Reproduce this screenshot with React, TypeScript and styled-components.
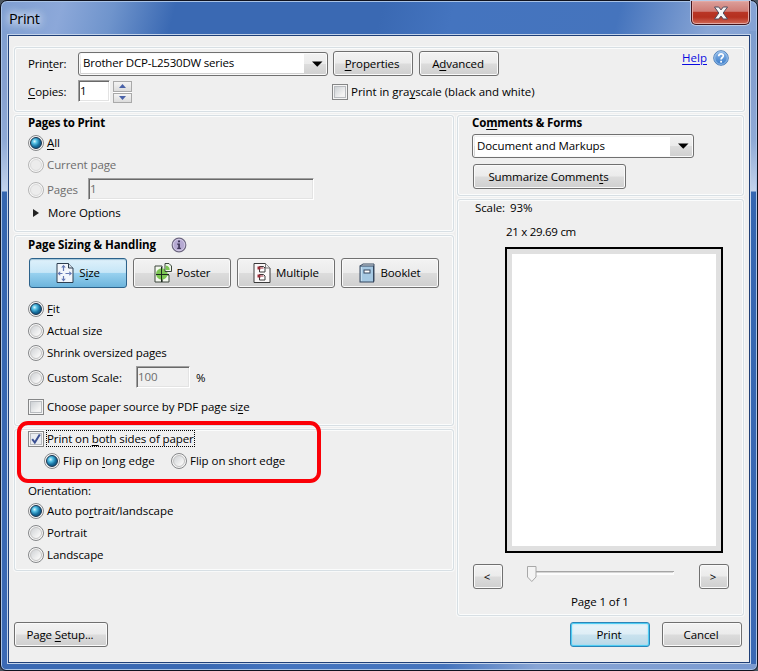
import React from 'react';
import styled, { createGlobalStyle, css } from 'styled-components';

const GlobalStyle = createGlobalStyle`
  * { box-sizing: border-box; }
  body { margin: 0; background: #4a5560; overflow: hidden; }
  #root { font-family: "Open Sans", "Noto Sans", sans-serif; font-size: 11.5px; line-height: 16px; color: #000; }
  button, input { font: inherit; color: inherit; margin: 0; }
`;

/* ---------- window chrome ---------- */

const Window = styled.div`
  width: 758px;
  height: 671px;
  border: 1px solid #10131f;
  border-radius: 7px 7px 6px 6px;
  box-shadow: inset 0 0 0 1px #a9c3e6;
  display: flex;
  flex-direction: column;
  padding: 0 7px 7px;
  background:
    linear-gradient(#809fd0 0, #87a1d0 60px, #8faad6 110px, #c3d3ec 160px, #3566b0 161px, #3b69b4 100%) left 1px top 30px / 7px 633px no-repeat,
    linear-gradient(#7d9dce 0, #87a1d0 60px, #8faad6 110px, #c3d3ec 160px, #3566b0 161px, #3b69b4 100%) right 1px top 30px / 7px 633px no-repeat,
    linear-gradient(105deg, #7f9ed1 0, #8ca8d9 60px, #6f94cc 110px, #3a69b3 170px, #3a69b3 370px, #4474bf 440px, #4574bd 600px, #88a5d5 690px, #7a9ad0 100%);
`;

const TitleBar = styled.header`
  height: 34px;
  flex: none;
  display: flex;
  justify-content: space-between;
  padding-left: 1px;
`;

const Title = styled.h1`
  margin: 8px 0 0;
  font-size: 14.5px;
  font-weight: 400;
  line-height: 20px;
  letter-spacing: -0.35px;
  text-shadow: 0 0 8px #fff, 0 0 10px #dce8f8, 0 0 12px #dce8f8;
`;

const CloseButton = styled.button`
  width: 59px;
  height: 24px;
  padding: 0;
  display: flex;
  align-items: center;
  justify-content: center;
  border: 1px solid #43141c;
  border-top: 0;
  border-radius: 0 0 5px 5px;
  box-shadow: inset 0 0 0 1px #e3a9a4, 0 0 0 1px #b9c9e4;
  background: linear-gradient(#dca09b 0, #cf7c75 45%, #b93626 48%, #b5301f 70%, #d06a58 100%);
`;

const Client = styled.main`
  flex: 1;
  border: 1px solid #1f3f77;
  box-shadow: 0 0 0 1px #c3d3ea;
  background: #efefef;
  padding: 11px 4px 0 5px;
  display: flex;
  flex-direction: column;
`;

/* ---------- layout ---------- */

const Panel = styled.section<{ $h: number; $pad: number }>`
  height: ${p => p.$h}px;
  flex: none;
  padding-left: ${p => p.$pad}px;
  border: 1px solid #d7dfe4;
  border-radius: 3px;
  box-shadow: inset 0 0 0 1px #fbfcfc, 0 0 0 1px #f8f9f9;
`;

const Columns = styled.div`
  display: grid;
  grid-template-columns: 440px 287px;
  column-gap: 3px;
  margin-top: 3px;
`;

const Column = styled.div`
  display: flex;
  flex-direction: column;
  gap: 3px;
`;

const Row = styled.div<{ $h: number; $top?: number; $indent?: number }>`
  height: ${p => p.$h}px;
  margin-top: ${p => p.$top ?? 0}px;
  margin-left: ${p => p.$indent ?? 0}px;
  display: flex;
  align-items: center;
`;

const Footer = styled.footer`
  display: flex;
  gap: 12px;
  margin-top: 6px;
  padding-right: 3px;
`;

const Gap = styled.span<{ $w?: number }>`
  ${p => (p.$w ? css`width: ${p.$w}px; flex: none;` : css`flex: 1;`)}
`;

/* ---------- text ---------- */

const Text = styled.span<{ $ls?: number; $bold?: boolean; $off?: boolean; $w?: number }>`
  white-space: nowrap;
  letter-spacing: ${p => p.$ls ?? -0.1}px;
  font-weight: ${p => (p.$bold ? 700 : 400)};
  color: ${p => (p.$off ? '#6d6d6d' : '#000')};
  ${p => p.$w && css`width: ${p.$w}px; flex: none;`}
  u { text-underline-offset: 2px; text-decoration-thickness: 1px; text-decoration-skip-ink: none; }
`;

/* Renders a caption; the letter after "_" is the underlined access key. */
function Caption({ t, ls, bold, off, w }: { t: string; ls?: number; bold?: boolean; off?: boolean; w?: number }) {
  const i = t.indexOf('_');
  return (
    <Text $ls={ls} $bold={bold} $off={off} $w={w}>
      {i < 0 ? t : <>{t.slice(0, i)}<u>{t[i + 1]}</u>{t.slice(i + 2)}</>}
    </Text>
  );
}

const HelpGroup = styled.div`
  display: flex;
  align-items: center;
  gap: 6px;
  margin: -11px 15px 0 0;
`;

const HelpLink = styled.a`
  color: #0a0ae0;
  text-decoration: underline;
  text-underline-offset: 2px;
`;

const FocusBox = styled.span`
  outline: 1px dotted #000;
  height: 15px;
  line-height: 15px;
  width: 147px;
`;

/* ---------- controls ---------- */

const Button = styled.button<{ $w: number; $h?: number; $kind?: 'active' | 'default' }>`
  width: ${p => p.$w}px;
  height: ${p => p.$h ?? 25}px;
  flex: none;
  display: flex;
  align-items: center;
  justify-content: center;
  gap: 5px;
  padding: 0 2px 0 0;
  border: 1px solid #707070;
  border-radius: 3px;
  box-shadow: inset 0 0 0 1px #fafafa;
  background: linear-gradient(#f3f3f3 0, #ebebeb 49%, #dcdcdc 51%, #cfcfcf 100%);
  ${p => p.$kind === 'active' && css`
    border-color: #2c628b;
    box-shadow: inset 0 1px 1px #9fc4d8;
    background: linear-gradient(#dff1fb 0, #c6e6f7 48%, #98d1ef 51%, #6cb4dc 100%);
  `}
  ${p => p.$kind === 'default' && css`
    border-color: #2b85b8;
    box-shadow: inset 0 0 0 1px #4fcdf3, inset 0 0 2px 1px #8fdcf5;
    background: linear-gradient(#e9f4f9 0, #deeef6 49%, #c9e2ee 51%, #b9d9e8 100%);
  `}
`;

const ModeButton = styled(Button)`
  padding: 0;
`;

const Combo = styled.div<{ $w: number }>`
  width: ${p => p.$w}px;
  height: 24px;
  flex: none;
  display: flex;
  align-items: center;
  border: 1px solid #707070;
  border-radius: 3px;
  padding: 1px;
  background: linear-gradient(#f2f2f2 0, #ebebeb 49%, #dddddd 51%, #cfcfcf 100%);
  box-shadow: inset 0 0 0 1px #fafafa;
`;

const ComboValue = styled.div`
  flex: 1;
  height: 19px;
  line-height: 18px;
  margin-left: 1px;
  padding-left: 2px;
  background: #fff;
`;

const Arrow = styled.svg`
  width: 22px;
  height: 6px;
  flex: none;
`;

const Field = styled.div<{ $w: number; $off?: boolean }>`
  width: ${p => p.$w}px;
  height: 22px;
  flex: none;
  margin-top: -2px;
  padding-left: 1px;
  line-height: 19px;
  border: 1px solid #a0a0a0;
  border-right-color: #fff;
  border-bottom-color: #fff;
  box-shadow: inset 1px 1px 0 #696969, inset -1px -1px 0 #e3e3e3;
  background: ${p => (p.$off ? '#f0f0f0' : '#fff')};
`;

const Spinner = styled.div`
  width: 19px;
  height: 22px;
  display: flex;
  flex-direction: column;
  gap: 1px;
  background: #fff;
`;

const SpinButton = styled.div`
  flex: 1;
  display: flex;
  align-items: center;
  justify-content: center;
  border: 1px solid #a9a9a9;
  background: linear-gradient(#f4f4f4, #dcdcdc);
`;

const Radio = styled.span<{ $on?: boolean; $off?: boolean }>`
  width: 16px;
  height: 16px;
  flex: none;
  margin-right: 3px;
  border-radius: 50%;
  border: 1px solid ${p => (p.$off ? '#b5b5b5' : '#858789')};
  box-shadow: inset 0 0 0 1px #f6f6f6;
  display: flex;
  align-items: center;
  justify-content: center;
  background: #f4f4f4;
  &::before {
    content: '';
    width: 10px;
    height: 10px;
    border-radius: 50%;
    border: 1px solid ${p => (p.$off ? '#dadada' : '#c4c4c4')};
    background: linear-gradient(135deg, #cfd2d5, #f4f4f4 75%);
    ${p => p.$off && css`background: #ececec;`}
    ${p => p.$on && css`
      border-color: #17324e;
      background: radial-gradient(circle at 36% 34%, #d9f6fd 0, #55c0e4 24%, #16709f 55%, #0c3a5f 100%);
    `}
  }
`;

const Check = styled.span`
  width: 16px;
  height: 16px;
  flex: none;
  margin-right: 3px;
  border: 1px solid #858687;
  background: #f5f5f5;
  display: flex;
  align-items: center;
  justify-content: center;
  svg { display: block; }
`;

const CheckWell = styled.span`
  width: 12px;
  height: 12px;
  border: 1px solid #b9bcc0;
  background: linear-gradient(135deg, #cdd1d5, #f3f3f3 75%);
`;

/* ---------- preview ---------- */

const Preview = styled.div`
  width: 218px;
  height: 306px;
  margin: 6px 0 0 47px;
  border: 2px solid #000;
  padding: 5px;
  background: #e0e0e0;
`;

const Sheet = styled.div`
  height: 100%;
  background: #fff;
`;

const PageCount = styled.div`
  margin: 5px 0 0 113px;
`;

/* ---------- duplex highlight ---------- */

const Duplex = styled.div`
  position: relative;
`;

const Highlight = styled.div`
  position: absolute;
  left: -11px;
  top: -9px;
  width: 304px;
  height: 62px;
  border: 4px solid #fb0007;
  border-radius: 11px;
  pointer-events: none;
`;

/* ---------- icons ---------- */

const DownArrow = () => (
  <Arrow viewBox="0 0 22 6"><path d="M8 0.5h10.5L13.25 5.8z" fill="#000" /></Arrow>
);

const CheckBox = ({ on }: { on?: boolean }) => (
  <Check>
    {on ? (
      <svg width="14" height="14" viewBox="0 0 14 14">
        <rect x="1.5" y="1.5" width="11" height="11" fill="#e9ecf0" stroke="#b9bcc0" />
        <path d="M3.2 7.2 5.8 10.6 10.8 2.4" fill="none" stroke="#3a4f92" strokeWidth="2" />
      </svg>
    ) : <CheckWell />}
  </Check>
);

const CloseGlyph = () => (
  <svg width="16" height="14" viewBox="0 0 16 14">
    <path d="M1.5 1h4.2L8 3.9 10.3 1h4.2L10.2 7l4.3 6h-4.2L8 10.1 5.7 13H1.5l4.3-6z" fill="#f5f5f5" stroke="#4f4a5c" strokeWidth="1" />
  </svg>
);

const HelpGlyph = () => (
  <svg width="16" height="16" viewBox="0 0 16 16">
    <defs>
      <linearGradient id="help" x1="0" y1="0" x2="0" y2="1">
        <stop offset="0" stopColor="#8fb9e8" /><stop offset="1" stopColor="#3478c8" />
      </linearGradient>
    </defs>
    <circle cx="8" cy="8" r="7.3" fill="url(#help)" stroke="#5585bd" />
    <circle cx="8" cy="8" r="6.3" fill="none" stroke="#a9cdf0" strokeWidth=".8" />
    <path d="M5.7 6.2c0-3.2 4.8-3 4.6-.2C10.2 7.6 8.1 7.5 8.1 9.6" fill="none" stroke="#fff" strokeWidth="1.7" />
    <rect x="7.2" y="10.8" width="1.8" height="1.8" fill="#fff" />
  </svg>
);

const InfoGlyph = () => (
  <svg width="16" height="16" viewBox="0 0 16 16">
    <circle cx="8" cy="8" r="6.8" fill="#b5a9d2" stroke="#6d6780" strokeWidth="1.2" />
    <circle cx="8" cy="8" r="5.7" fill="none" stroke="#d9d2ea" strokeWidth=".8" />
    <path d="M7 3.5h2v1.8H7zM6.2 6.5h2.7v4.3h1v1.2H6.2v-1.2h1V7.7h-1z" fill="#3f3658" />
  </svg>
);

const SizeGlyph = () => (
  <svg width="18" height="20" viewBox="0 0 18 20">
    <path d="M1 .5h11.5L17 5v14.5H1z" fill="#f2f6fc" stroke="#2d3e50" />
    <path d="M12.5 .5V5H17" fill="#d6dee8" stroke="#2d3e50" />
    <path d="M7.5 3v5M7.5 13v4M3 10.5h3.5M9.5 10.5h4" fill="none" stroke="#6378b4" strokeWidth="1.2" />
    <path d="M7.5 1.8 9.8 4.5H5.2zM7.5 18.5 9.8 15.8H5.2zM1.5 10.5 4.2 8.2v4.6zM16 10.5 13.3 8.2v4.6z" fill="#6378b4" />
  </svg>
);

const PosterGlyph = () => (
  <svg width="18" height="20" viewBox="0 0 18 20">
    <path d="M1 3h7v16H1zM8 12h7v7H8z" fill="#f4f8ef" stroke="#3c463c" />
    <circle cx="7.8" cy="11" r="5.8" fill="#7cc653" />
    <path d="M7.5 4v15M2 11.5h13" stroke="#1d2a1d" />
    <path d="M11 .5h4l2.5 2.5v5.5H11z" fill="#eef6e8" stroke="#3c463c" />
    <path d="M11.7 2.5c2.800 .2 4 2 4 4.500h-4z" fill="#7cc653" />
  </svg>
);

const MultipleGlyph = () => (
  <svg width="18" height="20" viewBox="0 0 18 20">
    <path d="M1 .5h11.5L17 5v14.5H1z" fill="#fbf8f8" stroke="#3a3a3a" />
    <path d="M12.5 .5V5H17" fill="#eee" stroke="#777" />
    <path d="M6.5 3.500h4l1.500 1.500v4H6.500zM6.500 11.500h4l1.500 1.500v4H6.500z" fill="#fff" stroke="#3a3a3a" />
    <path d="M4.500 3.500h3v3h-3zM4.500 11.500h3v3h-3z" fill="#9a2b36" />
    <path d="M7.500 5h3M7.500 13h3" stroke="#9a2b36" />
  </svg>
);

const BookletGlyph = () => (
  <svg width="16" height="20" viewBox="0 0 16 20">
    <path d="M1 3 4 1h11v17.5" fill="#dfe6ee" stroke="#3b4c63" />
    <rect x="1" y="3" width="13.5" height="16" fill="#a6c9e3" stroke="#34465e" />
    <path d="M2.5 4v14" stroke="#c7dff0" />
    <rect x="5" y="7" width="6" height="3" fill="#fff" stroke="#34465e" />
  </svg>
);

const SliderGlyph = () => (
  <svg width="150" height="22" viewBox="0 0 150 22">
    <rect x="9" y="5" width="139" height="1" fill="#a5a5a5" />
    <rect x="9" y="6" width="139" height="3" fill="#fcfcfc" />
    <rect x="9" y="6" width="138" height="1" fill="#d5d5d5" />
    <path d="M1.5 .5H10V11l-4.200 4.500L1.500 11z" fill="#f4f4f4" stroke="#a8a8a8" />
  </svg>
);

/* ---------- dialog ---------- */

type OptionProps = { label: string; h?: number; top?: number; on?: boolean; off?: boolean; ls?: number };
const Option = ({ label, h = 22, top, on, off, ls }: OptionProps) => (
  <Row $h={h} $top={top}>
    <Radio $on={on} $off={off} />
    <Caption t={label} off={off} ls={ls} />
  </Row>
);

export default function App() {
  return (
    <>
      <GlobalStyle />
      <Window>
        <TitleBar>
          <Title>Print</Title>
          <CloseButton aria-label="Close"><CloseGlyph /></CloseButton>
        </TitleBar>
        <Client>
          <Panel $h={65} $pad={13}>
            <Row $h={25} $top={3}>
              <Caption t="Prin_ter:" ls={-0.2} w={50} />
              <Combo $w={250}>
                <ComboValue><Caption t="Brother DCP-L2530DW series" ls={-0.2} /></ComboValue>
                <DownArrow />
              </Combo>
              <Gap $w={5} />
              <Button $w={80}><Caption t="_Properties" /></Button>
              <Gap $w={6} />
              <Button $w={80}><Caption t="A_dvanced" /></Button>
              <Gap />
              <HelpGroup>
                <HelpLink href="#">Help</HelpLink>
                <HelpGlyph />
              </HelpGroup>
            </Row>
            <Row $h={24} $top={4}>
              <Caption t="_Copies:" w={50} />
              <Field $w={32}><Caption t="1" /></Field>
              <Gap $w={3} />
              <Spinner>
                <SpinButton><svg width="7" height="4"><path d="M0 4 3.5 0 7 4z" fill="#4a62a8" /></svg></SpinButton>
                <SpinButton><svg width="7" height="4"><path d="M0 0 3.5 4 7 0z" fill="#4a62a8" /></svg></SpinButton>
              </Spinner>
              <Gap $w={200} />
              <CheckBox />
              <Caption t="Print in gra_yscale (black and white)" ls={-0.04} />
            </Row>
          </Panel>

          <Columns>
            <Column>
              <Panel $h={117} $pad={13}>
                <Row $h={14}><Caption t="Pages to Print" bold ls={-0.2} /></Row>
                <Option label="_All" top={2} on />
                <Option label="Current page" off />
                <Row $h={22} $top={3}>
                  <Radio $off />
                  <Caption t="Pages" off w={41} />
                  <Field $w={226} $off><Caption t="1" off /></Field>
                </Row>
                <Row $h={22} $top={1} $indent={5}>
                  <svg width="6" height="8"><path d="M0 0 6 4 0 8z" fill="#222" /></svg>
                  <Gap $w={9} />
                  <Caption t="More Options" />
                </Row>
              </Panel>

              <Panel $h={191} $pad={13}>
                <Row $h={18}>
                  <Caption t="Page Sizing & Handling" bold ls={-0.08} w={143} />
                  <InfoGlyph />
                </Row>
                <Row $h={30} $top={4} $indent={1}>
                  <ModeButton $w={98} $h={30} $kind="active"><SizeGlyph /><Caption t="S_ize" /></ModeButton>
                  <Gap $w={6} />
                  <ModeButton $w={98} $h={30}><PosterGlyph /><Caption t="Poster" /></ModeButton>
                  <Gap $w={6} />
                  <ModeButton $w={98} $h={30}><MultipleGlyph /><Caption t="Multiple" /></ModeButton>
                  <Gap $w={6} />
                  <ModeButton $w={98} $h={30}><BookletGlyph /><Caption t="Booklet" /></ModeButton>
                </Row>
                <Option label="_Fit" top={10} on />
                <Option label="Actual size" />
                <Option label="Shrink oversized pages" ls={-0.14} />
                <Row $h={22} $top={3}>
                  <Radio />
                  <Caption t="Custom Scale:" w={89} ls={0} />
                  <Field $w={54} $off><Caption t="100" off /></Field>
                  <Gap $w={6} />
                  <Caption t="%" />
                </Row>
                <Row $h={22} $top={7}>
                  <CheckBox />
                  <Caption t="Choose paper source by PDF page si_ze" />
                </Row>
              </Panel>

              <Panel $h={142} $pad={13}>
                <Duplex>
                  <Highlight />
                  <Row $h={17}>
                    <CheckBox on />
                    <FocusBox><Caption t="Print on _both sides of paper" /></FocusBox>
                  </Row>
                  <Row $h={22} $top={3} $indent={16}>
                    <Radio $on />
                    <Caption t="Flip on _long edge" w={108} ls={0.05} />
                    <Radio />
                    <Caption t="Flip on short edge" ls={-0.05} />
                  </Row>
                </Duplex>
                <Row $h={20} $top={9}><Caption t="Orientation:" ls={-0.14} /></Row>
                <Option label="Auto po_rtrait/landscape" h={20} on ls={-0.06} />
                <Option label="Portrait" top={1} />
                <Option label="Landscape" />
              </Panel>
            </Column>

            <Column>
              <Panel $h={81} $pad={14}>
                <Row $h={14}><Caption t="Co_mments & Forms" bold ls={-0.15} /></Row>
                <Row $h={24} $top={4}>
                  <Combo $w={222}>
                    <ComboValue><Caption t="Document and Markups" ls={-0.08} /></ComboValue>
                    <DownArrow />
                  </Combo>
                </Row>
                <Row $h={25} $top={6} $indent={1}>
                  <Button $w={153}><Caption t="Summarize Commen_ts" /></Button>
                </Row>
              </Panel>

              <Panel $h={417} $pad={0}>
                <Row $h={16} $indent={17}><Caption t="Scale:" w={35} /><Caption t="93%" /></Row>
                <Row $h={18} $top={7} $indent={48}><Caption t="21 x 29.69 cm" ls={-0.28} /></Row>
                <Preview><Sheet /></Preview>
                <Row $h={25} $top={11} $indent={15}>
                  <Button $w={30}><Caption t="<" /></Button>
                  <Gap $w={23} />
                  <SliderGlyph />
                  <Gap $w={23} />
                  <Button $w={30}><Caption t=">" /></Button>
                </Row>
                <PageCount><Caption t="Page 1 of 1" /></PageCount>
              </Panel>
            </Column>
          </Columns>

          <Footer>
            <Button $w={94}><Caption t="Page _Setup..." ls={-0.16} /></Button>
            <Gap />
            <Button $w={80} $kind="default"><Caption t="Print" /></Button>
            <Button $w={80}><Caption t="Cancel" /></Button>
          </Footer>
        </Client>
      </Window>
    </>
  );
}
